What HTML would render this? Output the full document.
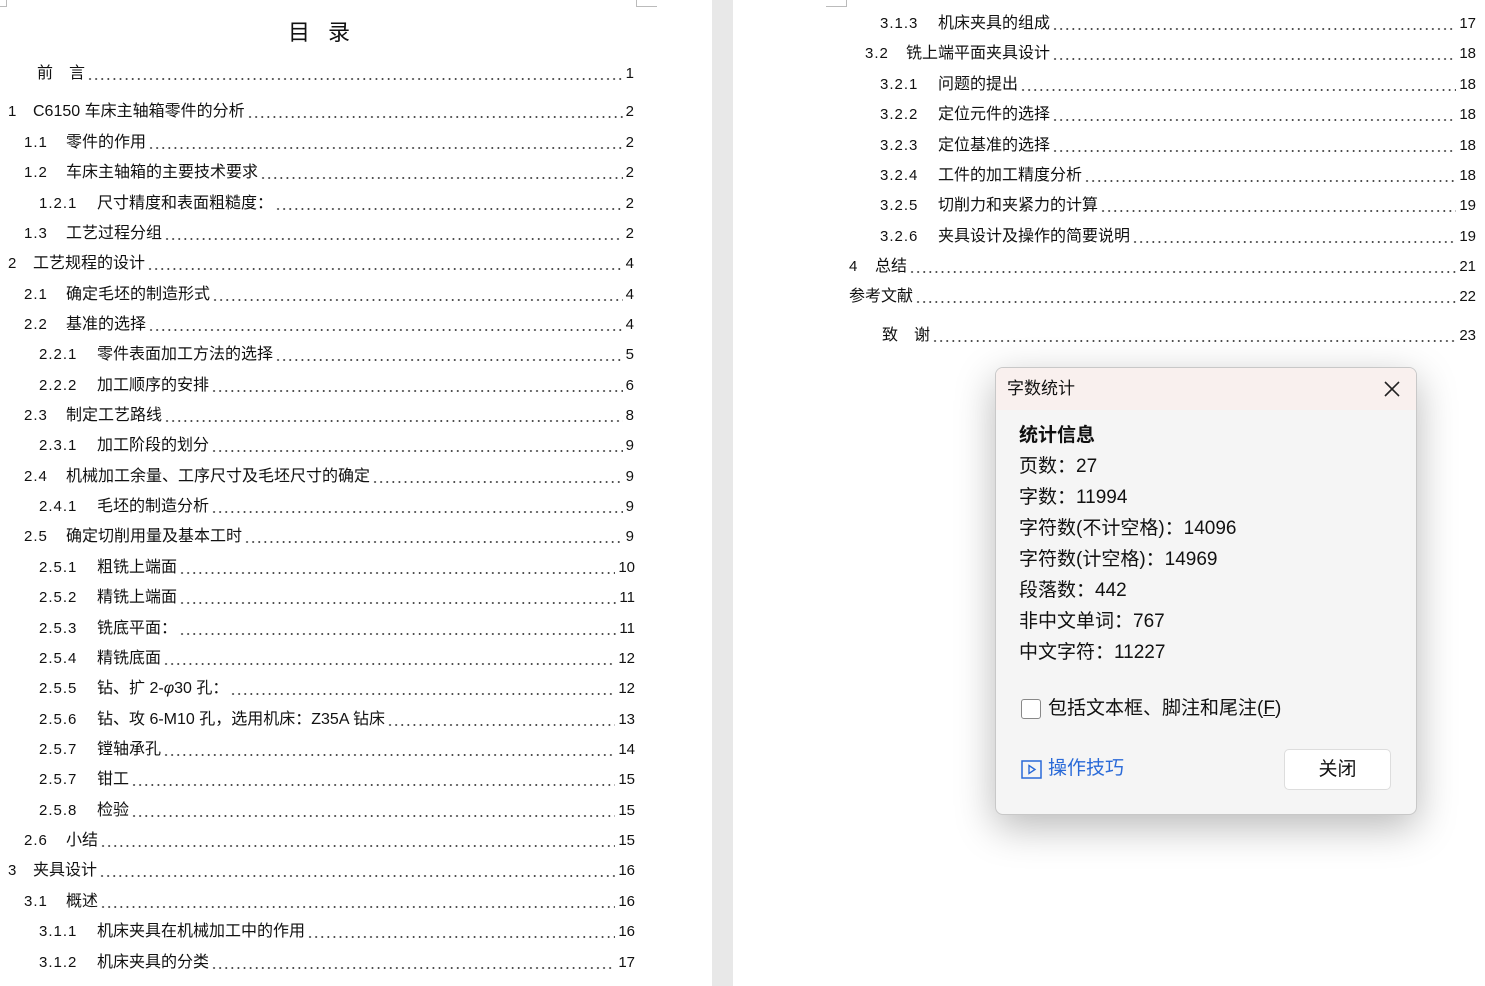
<!DOCTYPE html>
<html><head><meta charset="utf-8"><style>
body{margin:0;width:1485px;height:986px;overflow:hidden;background:#e8e8e8;position:relative;font-family:"Liberation Sans","Noto Sans CJK SC",sans-serif;}
.page{position:absolute;top:0;height:986px;background:#fff}
.r{position:absolute;display:flex;align-items:baseline;font-size:16px;color:#111;height:20px;line-height:20px;font-family:"Liberation Sans","Noto Sans CJK SC",sans-serif;}
.r .n{flex:none;letter-spacing:1px;font-size:15px}
.r .t{flex:none;padding-right:2px}
.r .d{flex:1;height:4px;align-self:flex-end;margin-bottom:3px;background-image:radial-gradient(circle,#444 0.8px,transparent 1.2px);background-size:6.1px 4px;background-repeat:repeat-x}
.r .p{flex:none;padding-left:3px;font-size:15px}
.corner{position:absolute;width:20px;height:6px;border-color:#bbb;border-style:solid;border-width:0}
.dlg{position:absolute;left:995px;top:367px;width:420px;height:446px;background:#f5f5f5;border:1px solid #c8c8c8;border-radius:8px;box-shadow:0 12px 40px rgba(0,0,0,.28);overflow:hidden}
.tb{height:42px;background:#f9f0ee;position:relative;font-size:17px;line-height:42px;padding-left:11px;color:#111}
.dl{position:absolute;left:23px;font-size:19px;color:#111;line-height:24px}
</style></head><body>
<div class="page" style="left:0;width:712px"></div>
<div class="page" style="left:733px;width:752px"></div>
<div class="corner" style="left:0;top:0;border-right-width:1px;border-bottom-width:1px;width:6px"></div>
<div class="corner" style="left:636px;top:0;border-left-width:1px;border-bottom-width:1px"></div>
<div class="corner" style="left:826px;top:0;border-right-width:1px;border-bottom-width:1px"></div>
<div style="position:absolute;left:288px;top:15px;font-size:22px;letter-spacing:18px;color:#111">目录</div>

<div class="r" style="left:37px;width:597px;top:64px"><span class="t">前　言</span><span class="d"></span><span class="p">1</span></div>

<div class="r" style="left:8px;width:626px;top:102px"><span class="n" style="width:25px">1</span><span class="t">C6150 车床主轴箱零件的分析</span><span class="d"></span><span class="p">2</span></div>
<div class="r" style="left:24px;width:610px;top:133px"><span class="n" style="width:42px">1.1</span><span class="t">零件的作用</span><span class="d"></span><span class="p">2</span></div>
<div class="r" style="left:24px;width:610px;top:163px"><span class="n" style="width:42px">1.2</span><span class="t">车床主轴箱的主要技术要求</span><span class="d"></span><span class="p">2</span></div>
<div class="r" style="left:39px;width:595px;top:194px"><span class="n" style="width:58px">1.2.1</span><span class="t">尺寸精度和表面粗糙度：</span><span class="d"></span><span class="p">2</span></div>
<div class="r" style="left:24px;width:610px;top:224px"><span class="n" style="width:42px">1.3</span><span class="t">工艺过程分组</span><span class="d"></span><span class="p">2</span></div>
<div class="r" style="left:8px;width:626px;top:254px"><span class="n" style="width:25px">2</span><span class="t">工艺规程的设计</span><span class="d"></span><span class="p">4</span></div>
<div class="r" style="left:24px;width:610px;top:285px"><span class="n" style="width:42px">2.1</span><span class="t">确定毛坯的制造形式</span><span class="d"></span><span class="p">4</span></div>
<div class="r" style="left:24px;width:610px;top:315px"><span class="n" style="width:42px">2.2</span><span class="t">基准的选择</span><span class="d"></span><span class="p">4</span></div>
<div class="r" style="left:39px;width:595px;top:345px"><span class="n" style="width:58px">2.2.1</span><span class="t">零件表面加工方法的选择</span><span class="d"></span><span class="p">5</span></div>
<div class="r" style="left:39px;width:595px;top:376px"><span class="n" style="width:58px">2.2.2</span><span class="t">加工顺序的安排</span><span class="d"></span><span class="p">6</span></div>
<div class="r" style="left:24px;width:610px;top:406px"><span class="n" style="width:42px">2.3</span><span class="t">制定工艺路线</span><span class="d"></span><span class="p">8</span></div>
<div class="r" style="left:39px;width:595px;top:436px"><span class="n" style="width:58px">2.3.1</span><span class="t">加工阶段的划分</span><span class="d"></span><span class="p">9</span></div>
<div class="r" style="left:24px;width:610px;top:467px"><span class="n" style="width:42px">2.4</span><span class="t">机械加工余量、工序尺寸及毛坯尺寸的确定</span><span class="d"></span><span class="p">9</span></div>
<div class="r" style="left:39px;width:595px;top:497px"><span class="n" style="width:58px">2.4.1</span><span class="t">毛坯的制造分析</span><span class="d"></span><span class="p">9</span></div>
<div class="r" style="left:24px;width:610px;top:527px"><span class="n" style="width:42px">2.5</span><span class="t">确定切削用量及基本工时</span><span class="d"></span><span class="p">9</span></div>
<div class="r" style="left:39px;width:596px;top:558px"><span class="n" style="width:58px">2.5.1</span><span class="t">粗铣上端面</span><span class="d"></span><span class="p">10</span></div>
<div class="r" style="left:39px;width:596px;top:588px"><span class="n" style="width:58px">2.5.2</span><span class="t">精铣上端面</span><span class="d"></span><span class="p">11</span></div>
<div class="r" style="left:39px;width:596px;top:619px"><span class="n" style="width:58px">2.5.3</span><span class="t">铣底平面：</span><span class="d"></span><span class="p">11</span></div>
<div class="r" style="left:39px;width:596px;top:649px"><span class="n" style="width:58px">2.5.4</span><span class="t">精铣底面</span><span class="d"></span><span class="p">12</span></div>
<div class="r" style="left:39px;width:596px;top:679px"><span class="n" style="width:58px">2.5.5</span><span class="t">钻、扩 2-<i>φ</i>30 孔：</span><span class="d"></span><span class="p">12</span></div>
<div class="r" style="left:39px;width:596px;top:710px"><span class="n" style="width:58px">2.5.6</span><span class="t">钻、攻 6-M10 孔，选用机床：Z35A 钻床</span><span class="d"></span><span class="p">13</span></div>
<div class="r" style="left:39px;width:596px;top:740px"><span class="n" style="width:58px">2.5.7</span><span class="t">镗轴承孔</span><span class="d"></span><span class="p">14</span></div>
<div class="r" style="left:39px;width:596px;top:770px"><span class="n" style="width:58px">2.5.7</span><span class="t">钳工</span><span class="d"></span><span class="p">15</span></div>
<div class="r" style="left:39px;width:596px;top:801px"><span class="n" style="width:58px">2.5.8</span><span class="t">检验</span><span class="d"></span><span class="p">15</span></div>
<div class="r" style="left:24px;width:611px;top:831px"><span class="n" style="width:42px">2.6</span><span class="t">小结</span><span class="d"></span><span class="p">15</span></div>
<div class="r" style="left:8px;width:627px;top:861px"><span class="n" style="width:25px">3</span><span class="t">夹具设计</span><span class="d"></span><span class="p">16</span></div>
<div class="r" style="left:24px;width:611px;top:892px"><span class="n" style="width:42px">3.1</span><span class="t">概述</span><span class="d"></span><span class="p">16</span></div>
<div class="r" style="left:39px;width:596px;top:922px"><span class="n" style="width:58px">3.1.1</span><span class="t">机床夹具在机械加工中的作用</span><span class="d"></span><span class="p">16</span></div>
<div class="r" style="left:39px;width:596px;top:953px"><span class="n" style="width:58px">3.1.2</span><span class="t">机床夹具的分类</span><span class="d"></span><span class="p">17</span></div>

<div class="r" style="left:880px;width:596px;top:14px"><span class="n" style="width:58px">3.1.3</span><span class="t">机床夹具的组成</span><span class="d"></span><span class="p">17</span></div>
<div class="r" style="left:865px;width:611px;top:44px"><span class="n" style="width:41px">3.2</span><span class="t">铣上端平面夹具设计</span><span class="d"></span><span class="p">18</span></div>
<div class="r" style="left:880px;width:596px;top:75px"><span class="n" style="width:58px">3.2.1</span><span class="t">问题的提出</span><span class="d"></span><span class="p">18</span></div>
<div class="r" style="left:880px;width:596px;top:105px"><span class="n" style="width:58px">3.2.2</span><span class="t">定位元件的选择</span><span class="d"></span><span class="p">18</span></div>
<div class="r" style="left:880px;width:596px;top:136px"><span class="n" style="width:58px">3.2.3</span><span class="t">定位基准的选择</span><span class="d"></span><span class="p">18</span></div>
<div class="r" style="left:880px;width:596px;top:166px"><span class="n" style="width:58px">3.2.4</span><span class="t">工件的加工精度分析</span><span class="d"></span><span class="p">18</span></div>
<div class="r" style="left:880px;width:596px;top:196px"><span class="n" style="width:58px">3.2.5</span><span class="t">切削力和夹紧力的计算</span><span class="d"></span><span class="p">19</span></div>
<div class="r" style="left:880px;width:596px;top:227px"><span class="n" style="width:58px">3.2.6</span><span class="t">夹具设计及操作的简要说明</span><span class="d"></span><span class="p">19</span></div>
<div class="r" style="left:849px;width:627px;top:257px"><span class="n" style="width:26px">4</span><span class="t">总结</span><span class="d"></span><span class="p">21</span></div>
<div class="r" style="left:849px;width:627px;top:287px"><span class="t">参考文献</span><span class="d"></span><span class="p">22</span></div>
<div class="r" style="left:882px;width:594px;top:326px"><span class="t">致　谢</span><span class="d"></span><span class="p">23</span></div>

<div class="dlg">
 <div class="tb">字数统计
  <svg style="position:absolute;right:16px;top:13px" width="16" height="16" viewBox="0 0 16 16"><path d="M1 1L15 15M15 1L1 15" stroke="#222" stroke-width="1.6"/></svg>
 </div>
 <div class="dl" style="top:56px;font-weight:bold">统计信息</div>
 <div class="dl" style="top:87px">页数：27</div>
 <div class="dl" style="top:118px">字数：11994</div>
 <div class="dl" style="top:149px">字符数(不计空格)：14096</div>
 <div class="dl" style="top:180px">字符数(计空格)：14969</div>
 <div class="dl" style="top:211px">段落数：442</div>
 <div class="dl" style="top:242px">非中文单词：767</div>
 <div class="dl" style="top:273px">中文字符：11227</div>
 <div style="position:absolute;left:25px;top:331px;width:18px;height:18px;border:1px solid #888;border-radius:3px;background:#fff"></div>
 <div class="dl" style="top:329px;left:52px">包括文本框、脚注和尾注(<u>F</u>)</div>
 <svg style="position:absolute;left:25px;top:392px" width="21" height="19" viewBox="0 0 21 19"><rect x="1" y="1" width="19" height="17" fill="none" stroke="#2a6ad8" stroke-width="1.5"/><path d="M8 5.5L14 9.5L8 13.5Z" fill="none" stroke="#2a6ad8" stroke-width="1.4"/></svg>
 <div class="dl" style="top:389px;left:52px;color:#2a6ad8">操作技巧</div>
 <div style="position:absolute;left:288px;top:381px;width:105px;height:39px;background:#fff;border:1px solid #ddd;border-radius:5px;font-size:19px;line-height:39px;text-align:center;color:#111">关闭</div>
</div>
</body></html>
